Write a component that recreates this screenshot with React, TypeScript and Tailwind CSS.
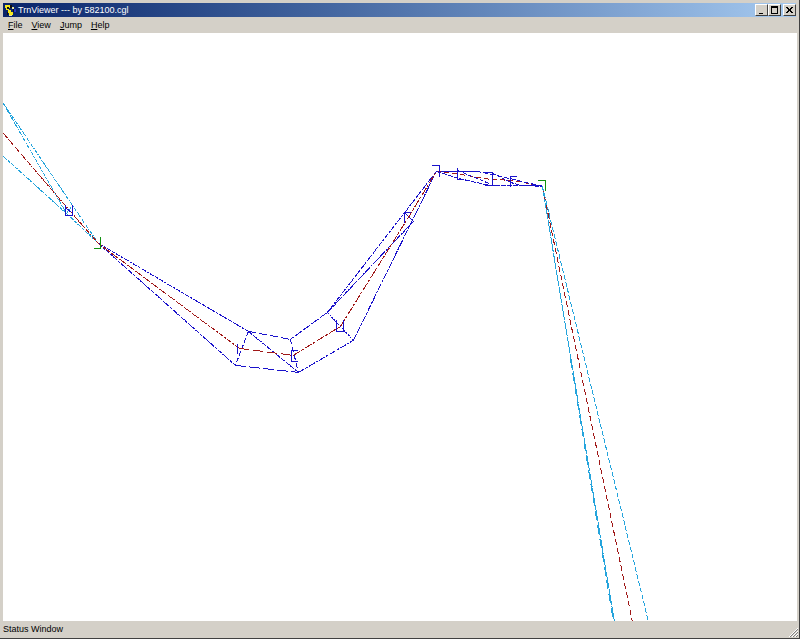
import type { ReactNode } from "react";

interface Stroke {
  d: string;
  color: string;
  dash?: string;
}

const BLUE = "#1a12cc";
const RED = "#a01818";
const CYAN = "#24a4dc";
const GREEN = "#109010";

// Track outlines, in canvas pixels
const outlines: Stroke[] = [
  { d: "M0 70L69 172L95 210", color: CYAN, dash: "4 1 1 1" },
  { d: "M0 70L63 180L69 172", color: CYAN, dash: "4 1 2 1" },
  { d: "M0 123L63 180L95 210", color: CYAN, dash: "5 1 3 1" },
  { d: "M0 100L66 177L95 210", color: RED, dash: "6 1 1 1" },
  { d: "M95 210L245 298", color: BLUE, dash: "5 1 3 1" },
  { d: "M95 210L232 332", color: BLUE, dash: "5 1 3 1" },
  { d: "M95 210L236 315", color: RED, dash: "5 1 3 1" },
  { d: "M245 298L287 306", color: BLUE, dash: "8 3" },
  { d: "M287 306L324 279L433 138", color: BLUE, dash: "5 1 3 1" },
  { d: "M232 332L295 339", color: BLUE, dash: "11 3" },
  { d: "M295 339L350 307L433 138", color: BLUE, dash: "7 1 3 1" },
  { d: "M245 298L232 332", color: BLUE, dash: "5 2" },
  { d: "M287 306L295 339", color: BLUE, dash: "5 3" },
  { d: "M245 298L295 339", color: BLUE, dash: "5 1" },
  { d: "M324 279L350 307", color: BLUE, dash: "2 1" },
  { d: "M324 279L410 188L401 179", color: BLUE, dash: "7 1 2 1" },
  { d: "M236 315L290 322", color: RED, dash: "10 4" },
  { d: "M290 322L337 293L405 184L433 138", color: RED, dash: "8 1 3 2" },
  { d: "M433 138L473 138", color: BLUE },
  { d: "M433 138L457 141L487 146L510 147L539 153", color: RED, dash: "5 3" },
  { d: "M433 138L455 145L486 152L518 152", color: BLUE, dash: "5 1" },
  { d: "M454 137L488 151", color: BLUE, dash: "4 2" },
  { d: "M473 138L489 141L539 153", color: BLUE, dash: "5 2" },
  { d: "M489 140L510 150L518 152L539 153", color: BLUE, dash: "4 1" },
  { d: "M539 153L611 588", color: CYAN, dash: "16 1" },
  { d: "M567 326L610 588", color: CYAN, dash: "9 5" },
  { d: "M539 153L629 588", color: RED, dash: "6 3" },
  { d: "M539 153L645 588", color: CYAN, dash: "5 2" },
];

// Node handles along the centre line
const handles: Stroke[] = [
  { d: "M62 172V182H69V172M63 175L68 179", color: BLUE },
  { d: "M97 204V215H91", color: GREEN },
  { d: "M234 311V321", color: BLUE },
  { d: "M295 317H288V328H295", color: BLUE },
  { d: "M333 287V298H340V287", color: BLUE },
  { d: "M408 179H401V190", color: BLUE },
  { d: "M429 132H436V144", color: BLUE },
  { d: "M454 135V146H461", color: BLUE },
  { d: "M482 139H489V152M482 152H497", color: BLUE },
  { d: "M514 143H507V154", color: BLUE },
  { d: "M518 152H539", color: BLUE },
  { d: "M535 147H542V158", color: GREEN },
];

const menus = ["File", "View", "Jump", "Help"];

export default function App() {
  return (
    <div className="flex h-screen flex-col border-r border-b border-[#404040] bg-[#d4d0c8] pt-[3px] pl-[3px] font-['Liberation_Sans',Arial,sans-serif] text-[9px] text-black">
      <header className="mr-[3px] flex h-[14px] shrink-0 items-center bg-linear-to-r from-[#0a246a] to-[#a6caf0] pl-px text-white">
        <AppIcon />
        <h1 className="ml-px flex-1 leading-3 whitespace-nowrap">TrnViewer --- by 582100.cgl</h1>
        <div className="flex">
          <CaptionButton label="Minimize">
            <path d="M3 8.5h4" />
          </CaptionButton>
          <CaptionButton label="Maximize">
            <path d="M2.5 3v6M8.5 3v6M2 8.5h7" />
            <path d="M2 2h7" strokeWidth="2" />
          </CaptionButton>
          <span className="w-[2px]" />
          <CaptionButton label="Close">
            <path d="M3 2l5 6M8 2L3 8" strokeWidth="1.5" />
          </CaptionButton>
        </div>
      </header>

      <nav className="flex h-4 shrink-0 items-center gap-[7px] pl-1">
        {menus.map((name) => (
          <button key={name} type="button" className="px-px leading-3">
            <span className="underline">{name[0]}</span>
            {name.slice(1)}
          </button>
        ))}
      </nav>

      <main className="mr-[2px] min-h-0 flex-1 bg-white">
        <svg className="block h-full w-full" fill="none" shapeRendering="crispEdges" role="img" aria-label="Track view">
          {[...outlines, ...handles].map((s) => (
            <path key={s.d} d={s.d} stroke={s.color} strokeDasharray={s.dash} transform="translate(.4 .4)" />
          ))}
        </svg>
      </main>

      <footer className="flex h-[17px] shrink-0 items-center justify-between">
        <span>Status Window</span>
        <svg className="self-end" width="10" height="10" shapeRendering="crispEdges" aria-hidden="true">
          <path d="M1 9L9 1M4 9l5-5M7 9l2-2" stroke="#808080" />
          <path d="M0 9L9 0M3 9l6-6M6 9l3-3" stroke="#fff" />
        </svg>
      </footer>
    </div>
  );
}

function CaptionButton({ label, children }: { label: string; children: ReactNode }) {
  return (
    <button
      type="button"
      aria-label={label}
      className="h-3 w-[13px] border border-t-white border-r-[#404040] border-b-[#404040] border-l-white bg-[#d4d0c8]"
    >
      <svg width="11" height="10" fill="none" stroke="#000" shapeRendering="crispEdges">
        {children}
      </svg>
    </button>
  );
}

function AppIcon() {
  return (
    <svg width="13" height="13" shapeRendering="crispEdges" aria-hidden="true">
      <path d="M1 1h5v3h-1v2h-3v-2h-1zM4 6h3v2h2v3h-4v-2h-1z" fill="#f4e81c" />
      <path d="M6 1h2v3h-2zM3 3h2v2h-2zM3 8h1v3h-1zM9 5h1v3h-1z" fill="#101010" />
      <path d="M8 3h2v2h-2zM5 11h3v1h-3z" fill="#e8e4a0" />
      <path d="M10 5h2v3h-2z" fill="#2838c8" />
    </svg>
  );
}
